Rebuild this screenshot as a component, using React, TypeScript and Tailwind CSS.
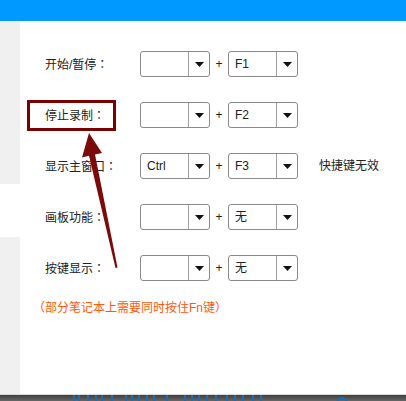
const FONT = "font-['Liberation_Sans','Noto_Sans_CJK_SC',sans-serif]";

type Row = { label: string; mod: string; key: string; note?: string };

const rows: Row[] = [
  { label: "开始/暂停", mod: "", key: "F1" },
  { label: "停止录制", mod: "", key: "F2" },
  { label: "显示主窗口", mod: "Ctrl", key: "F3", note: "快捷键无效" },
  { label: "画板功能", mod: "", key: "无" },
  { label: "按键显示", mod: "", key: "无" },
];

const Select = ({ value }: { value: string }) => (
  <div className="flex h-[26px] w-[70px] rounded-[3px] border border-[#8a8a8a] bg-white">
    <div className="flex flex-1 items-center pl-[6px] text-[12px] text-[#222]">{value}</div>
    <div className="flex w-[21px] items-center justify-center border-l border-[#a0a0a0]">
      <svg width="9" height="5" viewBox="0 0 9 5">
        <polygon points="0,0 9,0 4.5,5" fill="#111" />
      </svg>
    </div>
  </div>
);

export default function App() {
  return (
    <div className={`relative h-[401px] w-[406px] overflow-hidden bg-white ${FONT}`}>
      <div className="h-[21px] bg-[#0099ff]" />
      <div className="flex h-[373px]">
        <div className="flex w-[20px] flex-col">
          <div className="h-[163px] bg-[#f0f0f0]" />
          <div className="h-[53px] bg-white" />
          <div className="flex-1 bg-[#f0f0f0]" />
        </div>
        <div className="flex flex-1 flex-col pl-[25px] pt-[30px]">
          <div className="flex flex-col gap-[25px]">
            {rows.map((r) => (
              <div key={r.label} className="flex h-[26px] items-center">
                <div className="w-[95px] text-[12px] text-[#222]">
                  {r.label}
                  <span className="font-['Noto_Sans_CJK_TC',sans-serif]">：</span>
                </div>
                <Select value={r.mod} />
                <div className="w-[18px] text-center text-[12px] text-[#222]">+</div>
                <Select value={r.key} />
                {r.note && <div className="ml-[21px] text-[12px] text-[#222]">{r.note}</div>}
              </div>
            ))}
          </div>
          <div className="ml-[-12px] mt-[19px] text-[12px] leading-[16px] text-[#ff5a0a]">
            （部分笔记本上需要同时按住Fn键）
          </div>
        </div>
      </div>
      <div className="h-[1px] bg-[#d8d8d8]" />
      <div className="h-[6px] bg-gradient-to-b from-[#3f3f3f] to-[#666]">
        <svg width="406" height="6" viewBox="0 0 406 6">
          {[73, 78, 87, 95, 101, 111, 125, 131, 138, 146, 153, 166, 184, 191, 198, 206, 215, 226, 234, 242, 252, 260].map((x) => (
            <rect key={x} x={x} y="0" width="2" height="6" fill="#1b6cb0" />
          ))}
          <path d="M337 6 Q342 0 347 6" stroke="#1b6cb0" strokeWidth="2" fill="none" />
        </svg>
      </div>

      <div className="absolute left-[27px] top-[100px] h-[31px] w-[89px] border-[3px] border-[#7b0000]" />
      <svg className="absolute left-0 top-0" width="406" height="401" viewBox="0 0 406 401">
        <polygon
          points="89,133 102,153 95,154.5 117.5,267.5 115.5,268 89,155.8 82,157.5"
          fill="#7b0a0a"
        />
      </svg>
    </div>
  );
}
